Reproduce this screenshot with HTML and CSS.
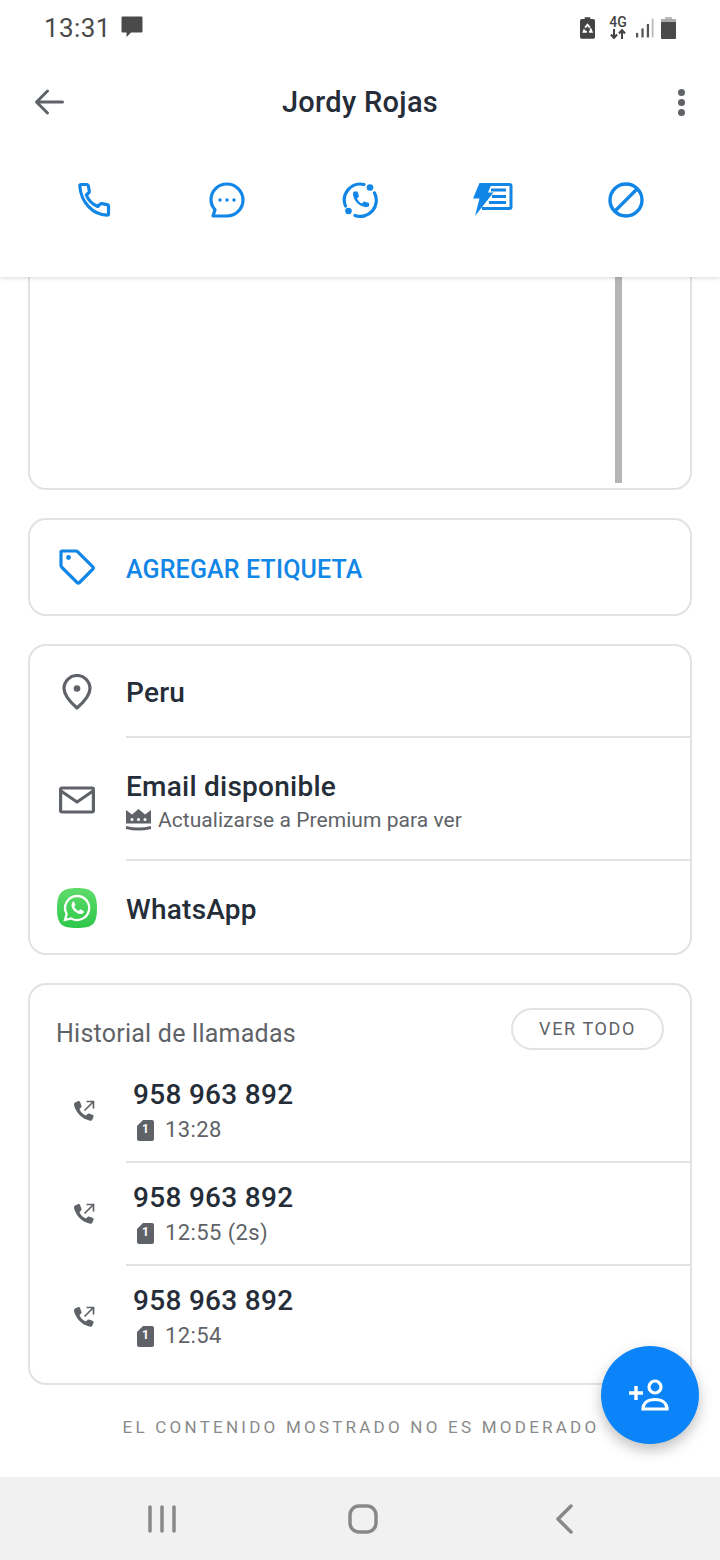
FILE: index.html
```html
<!DOCTYPE html>
<html lang="es">
<head>
<meta charset="utf-8">
<title>Jordy Rojas</title>
<meta name="viewport" content="width=device-width, initial-scale=1">
<link rel="stylesheet" href="styles.css">
</head>
<body>
<div class="screen">

	<header class="top">
		<div class="status">
			<span class="clock">13:31</span>
			<svg class="st_msg" width="24" height="24" viewBox="0 0 24 24"><path fill="#4a4a4a" d="M2.500 1.500h19q1 0 1 1v14q0 1-1 1H11l-4.500 4.500v-4.500H2.500q-1 0-1-1v-14q0-1 1-1z"/></svg>
			<span class="st_space"></span>
			<svg class="st_saver" width="15" height="22" viewBox="0 0 16 23"><path fill="#444" d="M5 0h6v2h3q2 0 2 2v17q0 2-2 2H2q-2 0-2-2V4q0-2 2-2h3z"/><g fill="none" stroke="#fff" stroke-width="2"><path d="M5.500 11l2.500-3 2.500 3"/><path d="M11 12l1.500 3.500h-3"/><path d="M4.800 13l-1 2.500h3.500"/></g></svg>
			<span class="st_net"><b>4G</b><svg width="16" height="10" viewBox="0 0 16 10"><path fill="none" stroke="#444" stroke-width="2" d="M4 0v8M1 5.500L4 9l3-3.500M12 10V2M9 4.500L12 1l3 3.500"/></svg></span>
			<svg class="st_signal" width="18" height="20" viewBox="0 0 20 21"><rect x="0" y="16" width="2.500" height="5" fill="#555"/><rect x="6" y="11" width="2.500" height="10" fill="#555"/><rect x="12" y="6" width="2.500" height="15" fill="#555"/><rect x="17.500" y="0" width="2" height="21" fill="#bbb"/></svg>
			<svg class="st_batt" width="15" height="22" viewBox="0 0 15 22"><rect x="4" y="0" width="7" height="3" fill="#bbb"/><rect x="0" y="2" width="15" height="5" fill="#aaa"/><rect x="0" y="5" width="15" height="17" rx="1" fill="#4a4a4a"/></svg>
		</div>

		<div class="toolbar">
			<svg width="32" height="32" viewBox="0 0 32 32"><path fill="none" stroke="#5f6368" stroke-width="3" stroke-linecap="round" stroke-linejoin="round" d="M30.500 16H4.500M15.500 5L4.500 16l11 11"/></svg>
			<h1>Jordy Rojas</h1>
			<span class="dots"><i></i><i></i><i></i></span>
		</div>

		<div class="actions">
			<svg width="40" height="36" viewBox="-4 0 40 36"><path fill="none" stroke="#1286e6" stroke-width="3.200" stroke-linejoin="round" d="M3 2.500h5.500q1.500 0 1.800 1.500l1 5q.2 1-.6 1.800l-2.400 2.200c2 5 6.500 9.500 11.500 11.500l2.400-2.400q.8-.7 1.800-.5l5 1q1.500.3 1.500 1.800V32q0 1.200-1.500 1.200C15 33 3 20.500 1.800 4 1.700 3 2 2.500 3 2.500z"/></svg>
			<svg width="40" height="36" viewBox="-2 0 40 36"><path fill="none" stroke="#1286e6" stroke-width="3.200" stroke-linejoin="round" d="M18 2C9 2 2 9 2 17.500c0 4 1.500 7.500 4 10.200L4 34h14c9 0 16-7.500 16-16S27 2 18 2z"/><g fill="#1286e6"><circle cx="11" cy="18" r="1.700"/><circle cx="18" cy="18" r="1.700"/><circle cx="25" cy="18" r="1.700"/></g></svg>
			<svg width="40" height="36" viewBox="-2 0 40 36"><g fill="none" stroke="#1286e6" stroke-width="3.200" stroke-linecap="round"><path d="M3.500 24A16 16 0 0 1 22 2.500"/><path d="M32.500 11A16 16 0 0 1 13 33.500"/></g><circle cx="28" cy="5.500" r="3.300" fill="#1286e6"/><circle cx="6.500" cy="29" r="3.300" fill="#1286e6"/><path fill="#1286e6" d="M12 9.500h3.500l1.500 5-2 2c1 2.500 2.500 4 5 5l2-2 5 1.500V24c-1 1-2.500 1.500-4 1-6.500-1.500-10.500-5.500-12-12-.2-1.500.2-2.500 1-3.500z"/></svg>
			<svg width="40" height="36" viewBox="0 0 40 36"><path fill="none" stroke="#1286e6" stroke-width="3" d="M16 2.500h20.500q1.500 0 1.500 1.500v21q0 1.500-1.500 1.500H9"/><path fill="#1286e6" d="M6.500 1H19l-4 9.500h5.500L2 34l4.500-17.500H0z"/><path stroke="#1286e6" stroke-width="3" d="M18 8h15M19 14.500h14M16 20.500h17"/></svg>
			<svg width="40" height="36" viewBox="-2 0 40 36"><g fill="none" stroke="#1286e6" stroke-width="3.400"><circle cx="18" cy="18" r="16"/><path d="M29 7L7 29"/></g></svg>
		</div>
	</header>

	<main class="content">
		<section class="card card_cut">
			<span class="scrollbar"></span>
		</section>

		<section class="card tag_row">
			<span class="ic">
				<svg width="36" height="36" viewBox="0 0 36 36"><path fill="none" stroke="#1286e6" stroke-width="3.200" stroke-linejoin="round" d="M3 2h14q1 0 1.800.8l15 15q1.200 1.200 0 2.400L20.500 33.500q-1.200 1.200-2.400 0L3 18.500q-1-1-1-2V3q0-1 1-1z"/><circle cx="9.500" cy="8.500" r="2.400" fill="#1286e6"/></svg>
			</span>
			<span class="tag_text">AGREGAR ETIQUETA</span>
		</section>

		<section class="card">
			<div class="row row_peru">
				<span class="ic">
					<svg width="30" height="36" viewBox="0 0 30 36"><path fill="none" stroke="#5f6368" stroke-width="3.200" stroke-linejoin="round" d="M15 34C7 27 2 21 2 14.500a13 13 0 0 1 26 0C28 21 23 27 15 34z"/><circle cx="15" cy="14.500" r="3.300" fill="#5f6368"/></svg>
				</span>
				<div class="row_body"><span class="row_title">Peru</span></div>
			</div>
			<div class="row row_mail">
				<span class="ic">
					<svg width="36" height="28" viewBox="0 0 36 28"><path fill="none" stroke="#5f6368" stroke-width="3.200" stroke-linejoin="round" d="M3 2h30q1.400 0 1.400 1.400v21.200q0 1.400-1.400 1.400H3q-1.400 0-1.400-1.400V3.400Q1.600 2 3 2zM2 5l16 11L34 5"/></svg>
				</span>
				<div class="row_body">
					<span class="row_title">Email disponible</span>
					<span class="row_sub">
						<svg width="25" height="22" viewBox="0 0 25 22"><path fill="#5f6368" d="M0 1l6 4.500L12.500 0 19 5.500 25 1v13.500H0z"/><g fill="#fff"><circle cx="6" cy="10.500" r="1.500"/><circle cx="12.500" cy="10.500" r="1.500"/><circle cx="19" cy="10.500" r="1.500"/></g><path fill="#5f6368" d="M0 17q12.500 3 25 0v3q-12.500 3-25 0z"/></svg>
						Actualizarse a Premium para ver
					</span>
				</div>
			</div>
			<div class="row row_wa">
				<span class="ic">
					<svg width="40" height="40" viewBox="0 0 40 40"><defs><linearGradient id="wa" x1="0" y1="0" x2="0" y2="1"><stop offset="0" stop-color="#5fdc6a"/><stop offset="1" stop-color="#2ec74a"/></linearGradient></defs><path fill="url(#wa)" d="M20 0c13 0 20 3 20 20s-5 20-20 20S0 37 0 20 7 0 20 0z"/><path fill="none" stroke="#fff" stroke-width="2.300" d="M20 8a12 12 0 0 0-10.300 18L8 32l6.200-1.600A12 12 0 1 0 20 8z"/><path fill="#fff" d="M15.500 13.500h1.500l1.500 3.500-1.300 1.700c1 2 2.500 3.300 4.500 4.300l1.500-1.700 3.500 1.700v1.500c-1 1.500-3 2-5 1.300-3.500-1.200-6-3.700-7-7-.4-2 0-3.500 1-4.500z"/></svg>
				</span>
				<div class="row_body"><span class="row_title">WhatsApp</span></div>
			</div>
		</section>

		<section class="card history">
			<div class="hist_head">
				<h2>Historial de llamadas</h2>
				<span class="btn_all">VER TODO</span>
			</div>
			<div class="call">
				<span class="call_ic"><svg width="24" height="24" viewBox="0 0 24 24"><use href="#out_call"/></svg></span>
				<div class="call_body">
					<span class="call_num">958 963 892</span>
					<span class="call_sub"><svg width="17" height="21" viewBox="0 0 17 21"><use href="#sim"/></svg><span class="num_one">1</span>13:28</span>
				</div>
			</div>
			<div class="call">
				<span class="call_ic"><svg width="24" height="24" viewBox="0 0 24 24"><use href="#out_call"/></svg></span>
				<div class="call_body">
					<span class="call_num">958 963 892</span>
					<span class="call_sub"><svg width="17" height="21" viewBox="0 0 17 21"><use href="#sim"/></svg><span class="num_one">1</span>12:55 (2s)</span>
				</div>
			</div>
			<div class="call">
				<span class="call_ic"><svg width="24" height="24" viewBox="0 0 24 24"><use href="#out_call"/></svg></span>
				<div class="call_body">
					<span class="call_num">958 963 892</span>
					<span class="call_sub"><svg width="17" height="21" viewBox="0 0 17 21"><use href="#sim"/></svg><span class="num_one">1</span>12:54</span>
				</div>
			</div>
		</section>

		<p class="note">EL CONTENIDO MOSTRADO NO ES MODERADO</p>
	</main>

	<nav class="navbar">
		<svg width="28" height="28" viewBox="0 0 28 28"><path stroke="#888" stroke-width="3.500" stroke-linecap="round" d="M2 2v24M14 2v24M26 2v24"/></svg>
		<svg class="nav_home" width="30" height="30" viewBox="0 0 30 30"><rect x="2" y="2" width="26" height="26" rx="9" fill="none" stroke="#888" stroke-width="3.500"/></svg>
		<svg width="20" height="30" viewBox="0 0 20 30"><path fill="none" stroke="#888" stroke-width="3.500" stroke-linecap="round" stroke-linejoin="round" d="M16 2L3 15l13 13"/></svg>
	</nav>

	<button class="fab" type="button" aria-label="Agregar contacto">
		<svg width="44" height="32" viewBox="0 0 44 32"><g fill="none" stroke="#fff" stroke-width="3.200"><circle cx="27" cy="8" r="6"/><path d="M15 30c0-6 5-9.500 12-9.500S39 24 39 30z"/></g><path stroke="#fff" stroke-width="3.400" d="M1 14h14M8 7v14"/></svg>
	</button>

	<svg class="defs" width="0" height="0">
		<symbol id="out_call" viewBox="0 0 24 24">
			<path fill="#5f6368" d="M3 3.500l3.500-1.500q1-.3 1.500.7L9.500 7q.3 1-.5 1.500L7.500 10c1 3 3.500 5.500 6.500 6.500l1.500-1.500q.6-.7 1.500-.4l4 1.500q1 .5.600 1.500l-1.200 3q-.6 1.500-2.300 1.100C10 20 4 14 2 6q-.3-1.600 1-2.500z"/>
			<path fill="none" stroke="#5f6368" stroke-width="1.700" d="M12.500 11.500L21 3M14.500 2.500H21.500V9.500"/>
		</symbol>
		<symbol id="sim" viewBox="0 0 17 21">
			<path fill="#5f6368" d="M6 0h9q2 0 2 2v17q0 2-2 2H2q-2 0-2-2V6z"/>
		</symbol>
	</svg>
</div>
</body>
</html>
```

FILE: styles.css
```css
html, body { margin: 0; padding: 0; }
body { background: #fff; font-family: Roboto, "Liberation Sans", sans-serif; color: #252d38; }

.screen {
    position: relative;
    width: 720px;
    height: 1560px;
    overflow: hidden;
    display: flex;
    flex-direction: column;
}

/* top part, stays over the scrolled cards */
.top {
    height: 277px;
    flex: none;
    position: relative;
    z-index: 2;
    background: #fff;
    box-shadow: 0 1px 4px rgba(0,0,0,0.16);
}

.status {
    height: 56px;
    box-sizing: border-box;
    padding: 12px 44px 0 44px;
    display: flex;
    align-items: flex-start;
}
.clock { font-size: 26px; line-height: 32px; color: #4a4a4a; letter-spacing: 0.4px; }
.st_msg { margin: 3px 0 0 9px; }
.st_space { flex: 1; }
.st_saver { margin: 5px 0 0 0; }
.st_net { width: 16px; margin: 4px 0 0 15px; display: flex; flex-direction: column; align-items: center; }
.st_net b { font-size: 14px; line-height: 13px; color: #444; font-weight: 500; }
.st_signal { margin: 6px 0 0 10px; }
.st_batt { margin: 5px 0 0 7px; }

.toolbar {
    height: 92px;
    padding: 0 32px;
    display: flex;
    align-items: center;
    justify-content: space-between;
}
.toolbar h1 { margin: 0; font-size: 29px; font-weight: 500; letter-spacing: 0.3px; }
.dots { width: 32px; display: flex; flex-direction: column; align-items: flex-end; gap: 3px; }
.dots i { width: 7px; height: 7px; border-radius: 50%; background: #5f6368; margin-right: 3px; }

.actions {
    height: 104px;
    padding: 0 74px;
    display: flex;
    align-items: center;
    justify-content: space-between;
}

/* cards */
.content {
    flex: 1;
    display: flex;
    flex-direction: column;
    gap: 28px;
    padding: 0 28px;
}
.card {
    border: 2px solid #e2e2e2;
    border-radius: 18px;
    background: #fff;
    flex: none;
}
.card_cut {
    height: 211px;
    border-top: 0;
    border-radius: 0 0 18px 18px;
    position: relative;
}
.scrollbar {
    position: absolute;
    left: 585px;
    top: 0;
    width: 7px;
    height: 206px;
    background: #b5b5b5;
}

.ic {
    width: 94px;
    margin-right: 2px;
    flex: none;
    display: flex;
    align-items: center;
    justify-content: center;
}
.tag_row { height: 94px; display: flex; align-items: center; }
.tag_text { color: #1286e6; font-size: 25px; font-weight: 500; letter-spacing: 0.15px; padding-top: 4px; }

.row { display: flex; }
.row_body {
    flex: 1;
    display: flex;
    flex-direction: column;
    justify-content: center;
    border-bottom: 2px solid #e2e2e2;
    box-sizing: border-box;
}
.row_peru { height: 92px; }
.row_peru .row_body { padding-top: 3px; }
.row_mail { height: 123px; }
.row_mail .row_body { padding-top: 6px; }
.row_wa { height: 92px; }
.row_wa .ic { padding-top: 2px; }
.row_wa .row_body { border-bottom: 0; padding-top: 5px; }
.row_title { font-size: 28px; font-weight: 500; line-height: 33px; letter-spacing: 0.25px; }
.row_sub { font-size: 21px; line-height: 28px; color: #5f6368; display: flex; align-items: center; gap: 7px; margin-top: 3px; letter-spacing: 0.05px; }

.history { height: 398px; }
.hist_head {
    height: 75px;
    padding: 23px 26px 0 26px;
    box-sizing: border-box;
    display: flex;
    justify-content: space-between;
    align-items: flex-start;
}
.hist_head h2 { margin: 12px 0 0 0; font-size: 25px; line-height: 28px; font-weight: 400; color: #5f6368; letter-spacing: 0.24px; }
.btn_all {
    width: 149px;
    height: 38px;
    line-height: 38px;
    border: 2px solid #e2e2e2;
    border-radius: 21px;
    text-align: center;
    font-size: 18px;
    color: #5f6368;
    letter-spacing: 1.6px;
}

.call { display: flex; height: 103px; }
.call_ic { width: 96px; flex: none; display: flex; justify-content: center; align-items: flex-start; padding: 39px 0 0 12px; box-sizing: border-box; }
.call_body {
    flex: 1;
    position: relative;
    border-bottom: 2px solid #e2e2e2;
    padding-left: 7px;
    display: flex;
    flex-direction: column;
}
.call:last-child .call_body { border-bottom: 0; }
.call_num { font-size: 28px; line-height: 34px; font-weight: 500; letter-spacing: 0.3px; margin-top: 18px; }
.call_sub { font-size: 22px; line-height: 28px; color: #5f6368; display: flex; align-items: center; gap: 11px; margin-top: 4px; letter-spacing: 0.4px; padding-left: 4px; position: relative; }
.num_one { position: absolute; left: 9px; top: 5px; font-size: 12px; line-height: 16px; font-weight: 700; color: #fff; letter-spacing: 0; }

.note {
    margin: 3px 0 0 0;
    padding-left: 2px;
    font-size: 17px;
    line-height: 22px;
    text-align: center;
    color: #8a8a8a;
    letter-spacing: 3.23px;
}

.navbar {
    height: 83px;
    flex: none;
    background: #f1f1f1;
    padding: 0 145px 0 148px;
    display: flex;
    align-items: center;
    justify-content: space-between;
}
.nav_home { margin-right: 5px; }

.fab {
    position: absolute;
    left: 601px;
    top: 1346px;
    width: 98px;
    height: 98px;
    border: 0;
    padding: 0;
    border-radius: 50%;
    background: #0a84f8;
    box-shadow: 0 6px 14px rgba(0,0,0,0.25);
    display: flex;
    align-items: center;
    justify-content: center;
}
.defs { position: absolute; }
```
